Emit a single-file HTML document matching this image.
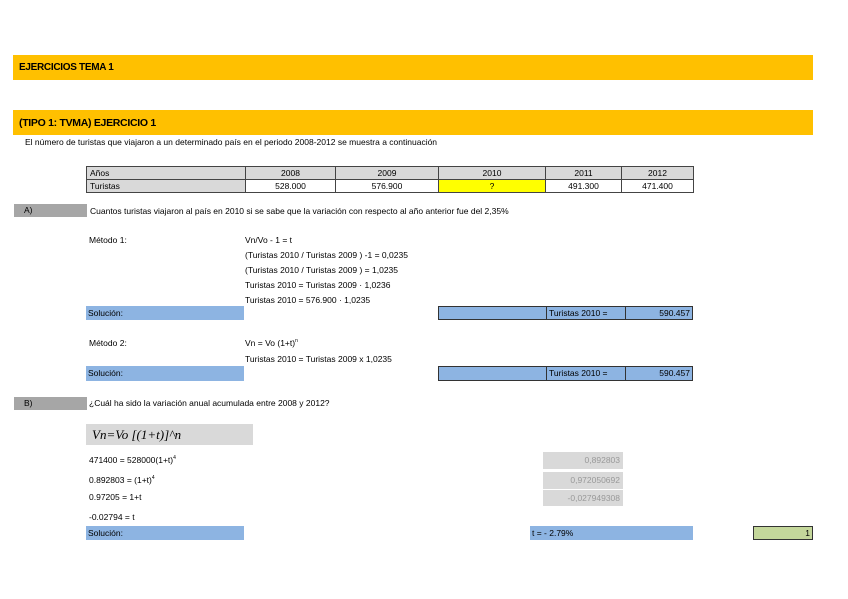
<!DOCTYPE html>
<html><head><meta charset="utf-8"><style>
body{margin:0;width:848px;height:599px;background:#fff;position:relative;font-family:"Liberation Sans",sans-serif;font-size:8.5px;color:#000;overflow:hidden}
.a{position:absolute;white-space:nowrap}
.bar{position:absolute;background:#ffc000;left:13px;width:800px;height:25px}
.bar span{position:absolute;left:6px;top:7px;font-size:10px;font-weight:bold;letter-spacing:-0.3px}
table{position:absolute;border-collapse:collapse;left:86px;top:166px}
td{border:1px solid #444;height:12px;padding:0 3px;font-size:8.5px;text-align:center}
.blue{position:absolute;background:#8db4e2}
.gb{position:absolute;background:#d9d9d9;color:#999;text-align:right;padding-right:3px;box-sizing:border-box;line-height:17px}
</style></head><body>
<div class="bar" style="top:55px"><span>EJERCICIOS TEMA 1</span></div>
<div class="bar" style="top:110px"><span style="font-size:10.5px">(TIPO 1: TVMA) EJERCICIO 1</span></div>
<div class="a" style="left:25px;top:137px">El número de turistas que viajaron a un determinado país en el periodo 2008-2012 se muestra a continuación</div>
<table>
<tr style="background:#d9d9d9"><td style="width:152px;text-align:left">Años</td><td style="width:83px">2008</td><td style="width:96px">2009</td><td style="width:100px">2010</td><td style="width:69px">2011</td><td style="width:65px">2012</td></tr>
<tr><td style="text-align:left;background:#d9d9d9">Turistas</td><td>528.000</td><td>576.900</td><td style="background:#ffff00">?</td><td>491.300</td><td>471.400</td></tr>
</table>
<div class="a" style="left:14px;top:204px;width:73px;height:13px;background:#a6a6a6"><span style="margin-left:10px;line-height:13px">A)</span></div>
<div class="a" style="left:90px;top:206px">Cuantos turistas viajaron al país en 2010 si se sabe que la variación con respecto al año anterior fue del 2,35%</div>
<div class="a" style="left:89px;top:235px">Método 1:</div>
<div class="a" style="left:245px;top:233px;line-height:15px">Vn/Vo - 1 = t<br>(Turistas 2010 / Turistas 2009 ) -1 = 0,0235<br>(Turistas 2010 / Turistas 2009 ) = 1,0235<br>Turistas 2010 = Turistas 2009 · 1,0236<br>Turistas 2010 = 576.900 · 1,0235</div>
<div class="blue" style="left:86px;top:306px;width:158px;height:14px"><span style="margin-left:2px;line-height:14px">Solución:</span></div>
<div class="a" style="left:438px;top:306px;width:255px;height:14px;border:1px solid #333;box-sizing:border-box;background:#8db4e2;display:flex">
<div style="width:107px;border-right:1px solid #333"></div><div style="width:76px;border-right:1px solid #333;padding-left:2px;line-height:12px">Turistas 2010 =</div><div style="flex:1;text-align:right;padding-right:2px;line-height:12px">590.457</div></div>
<div class="a" style="left:89px;top:338px">Método 2:</div>
<div class="a" style="left:245px;top:338px">Vn = Vo (1+t)<sup style="font-size:5px">n</sup></div>
<div class="a" style="left:245px;top:354px">Turistas 2010 = Turistas 2009 x 1,0235</div>
<div class="blue" style="left:86px;top:366px;width:158px;height:15px"><span style="margin-left:2px;line-height:15px">Solución:</span></div>
<div class="a" style="left:438px;top:366px;width:255px;height:15px;border:1px solid #333;box-sizing:border-box;background:#8db4e2;display:flex">
<div style="width:107px;border-right:1px solid #333"></div><div style="width:76px;border-right:1px solid #333;padding-left:2px;line-height:13px">Turistas 2010 =</div><div style="flex:1;text-align:right;padding-right:2px;line-height:13px">590.457</div></div>
<div class="a" style="left:14px;top:397px;width:73px;height:13px;background:#a6a6a6"><span style="margin-left:10px;line-height:13px">B)</span></div>
<div class="a" style="left:89px;top:398px">¿Cuál ha sido la variación anual acumulada entre 2008 y 2012?</div>
<div class="a" style="left:86px;top:424px;width:167px;height:21px;background:#d9d9d9;font-family:'Liberation Serif',serif;font-style:italic;font-size:13px;line-height:21px"><span style="margin-left:6px">Vn=Vo [(1+t)]^n</span></div>
<div class="a" style="left:89px;top:455px">471400 = 528000(1+t)<sup style="font-size:5px">4</sup></div>
<div class="a" style="left:89px;top:475px">0.892803 = (1+t)<sup style="font-size:5px">4</sup></div>
<div class="a" style="left:89px;top:492px">0.97205 = 1+t</div>
<div class="a" style="left:89px;top:512px">-0.02794 = t</div>
<div class="gb" style="left:543px;top:452px;width:80px;height:17px">0,892803</div>
<div class="gb" style="left:543px;top:472px;width:80px;height:17px">0,972050692</div>
<div class="gb" style="left:543px;top:490px;width:80px;height:16px;line-height:16px">-0,027949308</div>
<div class="blue" style="left:86px;top:526px;width:158px;height:14px"><span style="margin-left:2px;line-height:14px">Solución:</span></div>
<div class="blue" style="left:530px;top:526px;width:163px;height:14px"><span style="margin-left:2px;line-height:14px">t = - 2.79%</span></div>
<div class="a" style="left:753px;top:526px;width:60px;height:14px;background:#c4d79b;border:1px solid #333;box-sizing:border-box;text-align:right;padding-right:2px;line-height:12px">1</div>
</body></html>
